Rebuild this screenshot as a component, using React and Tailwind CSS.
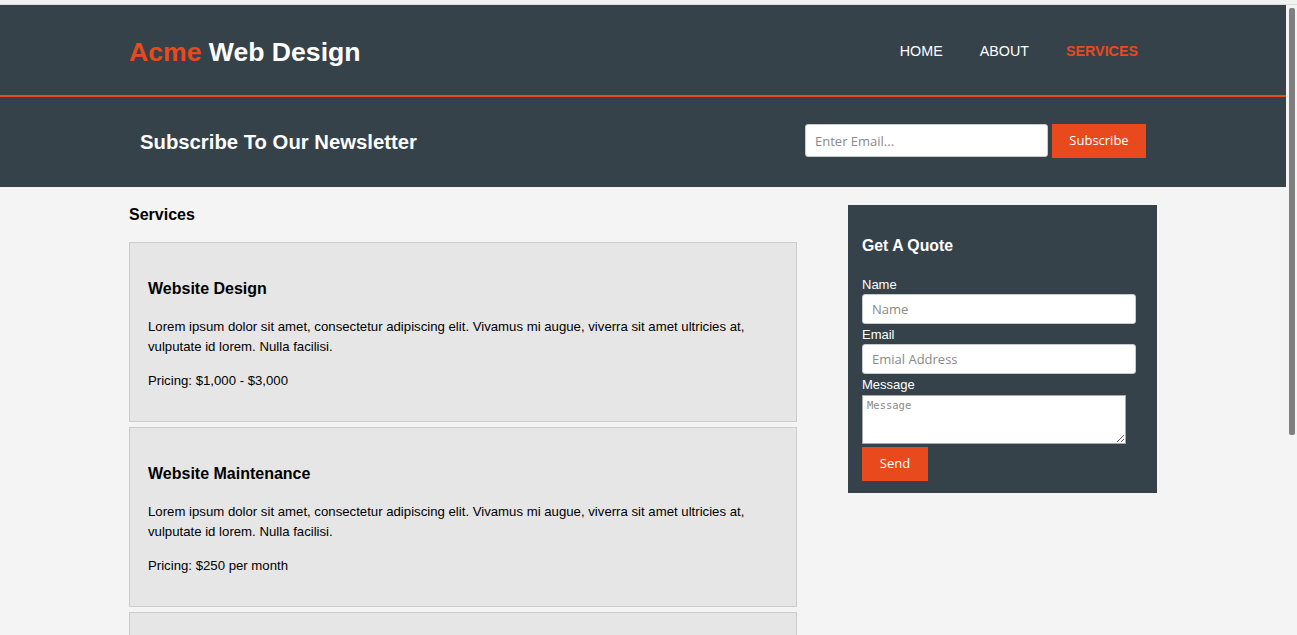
import React from "react";

const services = [
  { title: "Website Design", price: "Pricing: $1,000 - $3,000" },
  { title: "Website Maintenance", price: "Pricing: $250 per month" },
  { title: "Website Hosting", price: "Pricing: $25 per month" },
];

const lorem =
  "Lorem ipsum dolor sit amet, consectetur adipiscing elit. Vivamus mi augue, viverra sit amet ultricies at, vulputate id lorem. Nulla facilisi.";

export default function App() {
  return (
    <div className="h-[635px] overflow-hidden bg-[#f4f4f4] font-['Liberation_Sans',Arial,sans-serif]">
      <div className="h-[5px] border-b border-[#dcdcdc] bg-[#f2f2f2]" />
      <div className="flex h-[630px]">
        <div className="flex-1 overflow-hidden">
          <header className="h-[92px] border-b-2 border-[#e8491d] bg-[#35424a] text-white">
            <div className="mx-auto flex h-[90px] w-[1028px] items-center justify-between pt-[6px]">
              <h1 className="text-[26.6px] font-bold">
                <span className="text-[#e8491d]">Acme</span> Web Design
              </h1>
              <nav className="flex gap-[37px] pr-[19px] pb-[3px] text-[14.3px] uppercase">
                <a>Home</a>
                <a>About</a>
                <a className="font-bold text-[#e8491d]">Services</a>
              </nav>
            </div>
          </header>

          <section className="h-[90px] bg-[#35424a] text-white">
            <div className="mx-auto flex h-full w-[1028px] items-center justify-between">
              <h1 className="pl-[11px] text-[20.3px] font-bold">Subscribe To Our Newsletter</h1>
              <form className="flex items-center gap-[4px] pr-[11px] pb-[3px] font-['Open_Sans',sans-serif] text-[13px]">
                <input
                  type="email"
                  placeholder="Enter Email..."
                  className="h-[33px] w-[243px] rounded-[3px] border border-[#c7cbd0] bg-white px-[9px] text-black outline-none placeholder:text-[#8a8a8a]"
                />
                <button type="button" className="h-[34px] w-[94px] bg-[#e8491d] text-white">
                  Subscribe
                </button>
              </form>
            </div>
          </section>

          <div className="mx-auto flex w-[1028px] justify-between">
            <main className="w-[668px]">
              <h1 className="mt-[19px] text-[16px] leading-[18px] font-bold text-black">Services</h1>
              <ul className="mt-[18px] flex flex-col gap-[5px]">
                {services.map((s) => (
                  <li key={s.title} className="h-[180px] border border-[#cccccc] bg-[#e6e6e6] px-[18px] pt-[37px] text-black">
                    <h3 className="text-[16px] leading-[18px] font-bold">{s.title}</h3>
                    <p className="mt-[19px] text-[13.2px] leading-[20px]">{lorem}</p>
                    <p className="mt-[14px] text-[13.2px] leading-[20px]">{s.price}</p>
                  </li>
                ))}
              </ul>
            </main>

            <aside className="mt-[18px] h-[288px] w-[309px] bg-[#35424a] px-[14px] pt-[32px] text-white">
              <h3 className="text-[15.8px] leading-[18px] font-bold">Get A Quote</h3>
              <form className="mt-[22px]">
                <label className="block text-[13px] leading-[15px]">Name</label>
                <input
                  placeholder="Name"
                  className="mt-[2px] block h-[30px] w-[274px] rounded-[3px] border border-[#c7cbd0] bg-white px-[9px] font-['Open_Sans',sans-serif] text-[13px] text-black outline-none placeholder:text-[#8a8a8a]"
                />
                <label className="mt-[3px] block text-[13px] leading-[15px]">Email</label>
                <input
                  placeholder="Emial Address"
                  className="mt-[2px] block h-[30px] w-[274px] rounded-[3px] border border-[#c7cbd0] bg-white px-[9px] font-['Open_Sans',sans-serif] text-[13px] text-black outline-none placeholder:text-[#8a8a8a]"
                />
                <label className="mt-[3px] block text-[13px] leading-[15px]">Message</label>
                <textarea
                  placeholder="Message"
                  className="mt-[3px] block h-[49px] w-[264px] border border-[#a9a9a9] bg-white px-[4px] py-[2px] font-['DejaVu_Sans_Mono',monospace] text-[10.5px] text-black outline-none placeholder:text-[#8a8a8a]"
                />
                <button type="button" className="mt-[3px] h-[34px] w-[66px] bg-[#e8491d] font-['Open_Sans',sans-serif] text-[13px] text-white">
                  Send
                </button>
              </form>
            </aside>
          </div>
        </div>

        <div className="w-[11px] bg-[#f4f4f4] pt-[3px]">
          <div className="mx-auto h-[427px] w-[6px] rounded-[2px] bg-[#7f7f7f]" />
        </div>
      </div>
    </div>
  );
}
